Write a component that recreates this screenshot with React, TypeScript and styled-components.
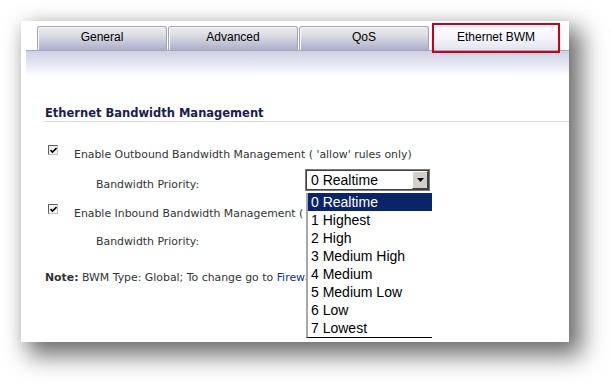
import React from "react";
import styled, { createGlobalStyle, css } from "styled-components";

const TABS = ["General", "Advanced", "QoS", "Ethernet BWM"];
const ACTIVE_TAB = "Ethernet BWM";

const PRIORITIES = [
  "0 Realtime",
  "1 Highest",
  "2 High",
  "3 Medium High",
  "4 Medium",
  "5 Medium Low",
  "6 Low",
  "7 Lowest",
];

const GlobalStyle = createGlobalStyle`
  html, body {
    margin: 0;
    padding: 0;
    background: #ffffff;
  }
  body {
    font-family: "DejaVu Sans", Verdana, sans-serif;
  }
`;

const Checkbox: React.FC = () => (
  <CheckBox>
    <svg width="7" height="7" viewBox="0 0 7 7">
      <path d="M0.5 3 L2.5 5 L6.5 1" fill="none" stroke="#000" strokeWidth="1.6" />
    </svg>
  </CheckBox>
);

const PrioritySelect: React.FC<{ open?: boolean }> = ({ open }) => (
  <SelectWrap>
    <SelectBox>
      <SelectValue>{PRIORITIES[0]}</SelectValue>
      <ArrowButton>
        <svg width="7" height="4" viewBox="0 0 7 4">
          <path d="M0 0 H7 L3.5 4 Z" fill="#000" />
        </svg>
      </ArrowButton>
    </SelectBox>
    {open && (
      <OptionList>
        {PRIORITIES.map((p, i) => (
          <Option key={p} $selected={i === 0}>
            {p}
          </Option>
        ))}
      </OptionList>
    )}
  </SelectWrap>
);

const App: React.FC = () => {
  return (
    <Page>
      <GlobalStyle />
      <Card>
        <TabBar>
          {TABS.map((t) => (
            <Tab key={t} $active={t === ACTIVE_TAB}>
              {t}
            </Tab>
          ))}
        </TabBar>
        <Band />
        <Section>
          <Heading>Ethernet Bandwidth Management</Heading>
          <CheckRow $top={24}>
            <Checkbox />
            <Label>Enable Outbound Bandwidth Management ( 'allow' rules only)</Label>
          </CheckRow>
          <PriorityRow $top={5}>
            <PriorityLabel>Bandwidth Priority:</PriorityLabel>
            <PrioritySelect open />
          </PriorityRow>
          <CheckRow $top={14}>
            <Checkbox />
            {/* the open option list covers the rest of this line */}
            <Label $clip={232}>Enable Inbound Bandwidth Management ( 'allow' rules only)</Label>
          </CheckRow>
          <PriorityRow $top={3}>
            <PriorityLabel>Bandwidth Priority:</PriorityLabel>
          </PriorityRow>
          <Note>
            <b>Note:</b> BWM Type: Global; To change go to <a>Firewall Settings &gt; BWM</a>
          </Note>
        </Section>
      </Card>
    </Page>
  );
};

const Page = styled.div`
  width: 611px;
  height: 384px;
  padding: 21px 0 0 21px;
  box-sizing: border-box;
  overflow: hidden;
  background: #ffffff;
`;

const Card = styled.div`
  width: 548px;
  height: 321px;
  box-sizing: border-box;
  padding: 5px 0 0 5px;
  background: #ffffff;
  overflow: hidden;
  box-shadow: 10px 11px 22px 3px rgba(0, 0, 0, 0.55),
    0 0 14px rgba(0, 0, 0, 0.07);
`;

const TabBar = styled.div`
  display: flex;
  gap: 1px;
  height: 24px;
  padding-left: 11px;
  border-bottom: 1px solid #a6a8ba;
`;

const Tab = styled.div<{ $active?: boolean }>`
  position: relative;
  width: 130px;
  height: 24px;
  box-sizing: border-box;
  display: flex;
  align-items: center;
  justify-content: center;
  padding-bottom: 4px;
  font-family: "Liberation Sans", Arial, sans-serif;
  font-size: 12px;
  color: #000;
  border: 1px solid #a2a4b4;
  border-bottom: none;
  border-radius: 3px 3px 0 0;
  background: linear-gradient(#ececee 0%, #dadae2 40%, #acaec8 100%);
  box-shadow: inset 1px 1px 0 #f8f8f8;

  ${(p) =>
    p.$active &&
    css`
      margin-left: 1px;
      border-color: transparent;
      background: linear-gradient(#ffffff 0%, #f4f4fa 50%, #e2e4f0 100%);
      box-shadow: none;

      &::after {
        content: "";
        position: absolute;
        left: 0;
        right: 0;
        top: -4px;
        bottom: -3px;
        border: 2px solid #c8001c;
      }
    `}
`;

const Band = styled.div`
  height: 25px;
  background: linear-gradient(#cdd1e4 0%, #e4e6f0 50%, #ffffff 100%);
`;

const Section = styled.div`
  padding-left: 19px;
  color: #333333;
  font-size: 10.9px;
`;

const Heading = styled.div`
  margin-top: 29px;
  height: 16px;
  line-height: 16px;
  font-size: 11.5px;
  font-weight: bold;
  color: #1b1b4f;
  border-bottom: 1px solid #dadada;
`;

const CheckRow = styled.div<{ $top: number }>`
  display: flex;
  align-items: flex-start;
  height: 18px;
  margin-top: ${(p) => p.$top}px;
  padding-left: 3px;
`;

const CheckBox = styled.span`
  width: 10px;
  height: 10px;
  flex: none;
  box-sizing: border-box;
  margin-top: -1px;
  display: flex;
  align-items: center;
  justify-content: center;
  background: #f2f2f2;
  border-top: 1px solid #5e5e5e;
  border-left: 1px solid #5e5e5e;
  border-right: 1px solid #c4c4c4;
  border-bottom: 1px solid #c4c4c4;
`;

const Label = styled.span<{ $clip?: number }>`
  margin-left: 16px;
  line-height: 18px;
  white-space: nowrap;
  overflow: hidden;
  max-width: ${(p) => (p.$clip ? `${p.$clip}px` : "none")};
`;

const PriorityRow = styled.div<{ $top: number }>`
  display: flex;
  align-items: flex-start;
  height: 22px;
  margin-top: ${(p) => p.$top}px;
  padding-left: 51px;
`;

const PriorityLabel = styled.span`
  width: 209px;
  margin-top: 8px;
  line-height: 16px;
  white-space: nowrap;
`;

const SelectWrap = styled.div`
  position: relative;
`;

const SelectBox = styled.div`
  width: 125px;
  height: 22px;
  box-sizing: border-box;
  display: flex;
  align-items: center;
  justify-content: space-between;
  padding: 1px;
  background: #ffffff;
  border: 1px solid #7c7c7c;
  box-shadow: inset 0 0 0 1px #404040;
`;

const SelectValue = styled.span`
  padding-left: 4px;
  font-family: "Liberation Sans", Arial, sans-serif;
  font-size: 14px;
  color: #000;
`;

const ArrowButton = styled.span`
  width: 16px;
  height: 18px;
  box-sizing: border-box;
  display: flex;
  align-items: center;
  justify-content: center;
  background: #d4d0c8;
  border-top: 1px solid #ffffff;
  border-left: 1px solid #ffffff;
  border-right: 1px solid #404040;
  border-bottom: 1px solid #404040;
`;

const OptionList = styled.div`
  position: absolute;
  top: 24px;
  left: 1px;
  width: 126px;
  box-sizing: border-box;
  background: #ffffff;
  border-left: 2px solid #a8a8a8;
  border-bottom: 1px solid #000000;
  z-index: 2;
`;

const Option = styled.div<{ $selected?: boolean }>`
  height: 18px;
  line-height: 18px;
  padding-left: 3px;
  font-family: "Liberation Sans", Arial, sans-serif;
  font-size: 14px;
  color: ${(p) => (p.$selected ? "#ffffff" : "#000000")};
  background: ${(p) => (p.$selected ? "#0a246a" : "transparent")};
  white-space: nowrap;
`;

const Note = styled.div`
  margin-top: 22px;
  line-height: 16px;
  max-width: 261px;
  overflow: hidden;
  white-space: nowrap;

  b {
    font-weight: bold;
  }

  a {
    color: #0a3399;
    text-decoration: none;
  }
`;

export default App;
